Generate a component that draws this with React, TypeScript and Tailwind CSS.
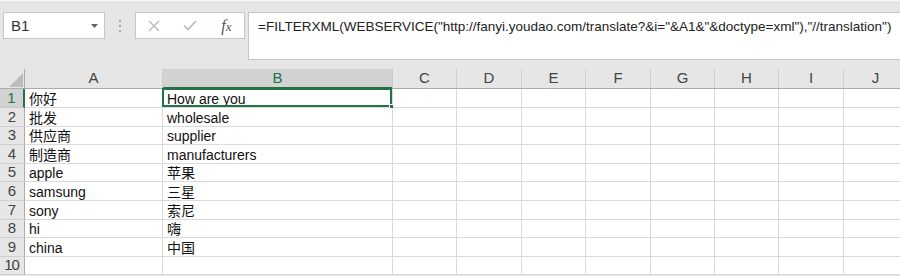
import React from "react";

const colWidths = [138, 230, 64, 65, 64, 65, 64, 64, 65, 64];
const colNames = ["A", "B", "C", "D", "E", "F", "G", "H", "I", "J"];
const rowHeights = [19, 19, 18, 19, 18, 19, 19, 18, 19, 18];
const data: [string, string][] = [
  ["你好", "How are you"],
  ["批发", "wholesale"],
  ["供应商", "supplier"],
  ["制造商", "manufacturers"],
  ["apple", "苹果"],
  ["samsung", "三星"],
  ["sony", "索尼"],
  ["hi", "嗨"],
  ["china", "中国"],
  ["", ""],
];

const FONT = '"Liberation Sans", "Noto Sans CJK SC", sans-serif';

export default function App() {
  return (
    <div
      className="w-[900px] h-[276px] overflow-hidden bg-[#e6e6e6] relative"
      style={{ fontFamily: FONT }}
    >
      {/* top strip */}
      <div className="h-[3px] bg-[#f3f3f3] border-b border-[#d8d8d8]" />
      {/* formula bar area */}
      <div className="flex items-start h-[66px] pt-[9px] pl-[3px]">
        <div className="w-[102px] h-[27px] bg-white border border-[#c6c6c6] flex items-center justify-between pl-[7px] pr-[6px]">
          <span className="text-[15px] text-[#333] leading-none">B1</span>
          <svg width="7" height="4" viewBox="0 0 7 4">
            <path d="M0 0 L7 0 L3.5 4 Z" fill="#666" />
          </svg>
        </div>
        <div className="w-[30px] h-[27px] flex flex-col items-center justify-center gap-[3px]">
          <div className="w-[2px] h-[2px] bg-[#a8a8a8]" />
          <div className="w-[2px] h-[2px] bg-[#a8a8a8]" />
          <div className="w-[2px] h-[2px] bg-[#a8a8a8]" />
        </div>
        <div className="w-[110px] h-[27px] bg-white border border-[#c6c6c6] flex items-center">
          <div className="w-[36px] flex justify-center pl-[1px]">
            <svg width="12" height="12" viewBox="0 0 12 12">
              <path d="M1 1 L11 11 M11 1 L1 11" stroke="#b8b8b8" strokeWidth="1.4" />
            </svg>
          </div>
          <div className="w-[38px] flex justify-center">
            <svg width="14" height="11" viewBox="0 0 14 11">
              <path d="M1 5.5 L5 9.5 L13 1" stroke="#b8b8b8" strokeWidth="1.6" fill="none" />
            </svg>
          </div>
          <div className="w-[36px] flex justify-center">
            <span
              className="text-[16px] italic text-[#555] leading-none"
              style={{ fontFamily: '"Liberation Serif", serif' }}
            >
              <span>f</span>
              <span className="text-[13px]">x</span>
            </span>
          </div>
        </div>
        <div className="ml-[3px] flex-1 h-[48px] bg-white border border-[#c6c6c6] border-r-0 pl-[9px] pt-[1px]">
          <span className="text-[13.5px] text-[#222] leading-none whitespace-nowrap">
            =FILTERXML(WEBSERVICE("http://fanyi.youdao.com/translate?&amp;i="&amp;A1&amp;"&amp;doctype=xml"),"//translation")
          </span>
        </div>
      </div>
      {/* sheet */}
      <div className="flex flex-col">
        {/* header row */}
        <div className="flex h-[20px] border-b border-[#ababab] bg-[#e6e6e6]">
          <div className="w-[25px] shrink-0 border-r border-[#ababab] relative">
            <svg className="absolute left-[9px] top-[4px]" width="14" height="14" viewBox="0 0 14 14">
              <path d="M14 0 L14 14 L0 14 Z" fill="#bdbdbd" />
            </svg>
          </div>
          {colNames.map((c, i) => (
            <div
              key={c}
              className={
                i === 1
                  ? "shrink-0 flex items-center justify-center border-r border-[#c8c8c8] bg-[#d2d2d2] text-[#217346] text-[15px] relative"
                  : "shrink-0 flex items-center justify-center border-r border-[#cfcfcf] text-[#444] text-[15px]"
              }
              style={{ width: colWidths[i] }}
            >
              {c}
              {i === 1 && <div className="absolute left-0 right-0 bottom-[-1px] h-[2px] bg-[#217346]" />}
            </div>
          ))}
        </div>
        {data.map((row, r) => (
          <div key={r} className="flex" style={{ height: rowHeights[r] }}>
            <div
              className={
                r === 0
                  ? "w-[25px] shrink-0 flex items-center justify-center bg-[#d2d2d2] text-[#217346] text-[15px] border-r-2 border-[#217346] border-b border-b-[#c8c8c8]"
                  : "w-[25px] shrink-0 flex items-center justify-center bg-[#e6e6e6] text-[#444] text-[15px] border-r border-[#ababab] border-b border-b-[#cfcfcf]"
              }
            >
              <span className={r === 9 ? "tracking-[-1px] pr-[1px]" : ""}>{r + 1}</span>
            </div>
            {colNames.map((c, i) => (
              <div
                key={c}
                className="shrink-0 bg-white border-r border-b border-[#dadada] flex items-center pl-[4px] pt-[1px] text-[14px] text-[#111] whitespace-nowrap relative leading-none"
                style={{ width: colWidths[i] }}
              >
                {i === 0 ? row[0] : i === 1 ? row[1] : ""}
                {r === 0 && i === 1 && (
                  <div className="absolute left-[-1px] top-[-1px] right-0 bottom-0 border-2 border-[#217346]">
                    <div className="absolute right-[-4px] bottom-[-4px] w-[5px] h-[5px] bg-[#217346] border border-white" />
                  </div>
                )}
              </div>
            ))}
          </div>
        ))}
      </div>
    </div>
  );
}
